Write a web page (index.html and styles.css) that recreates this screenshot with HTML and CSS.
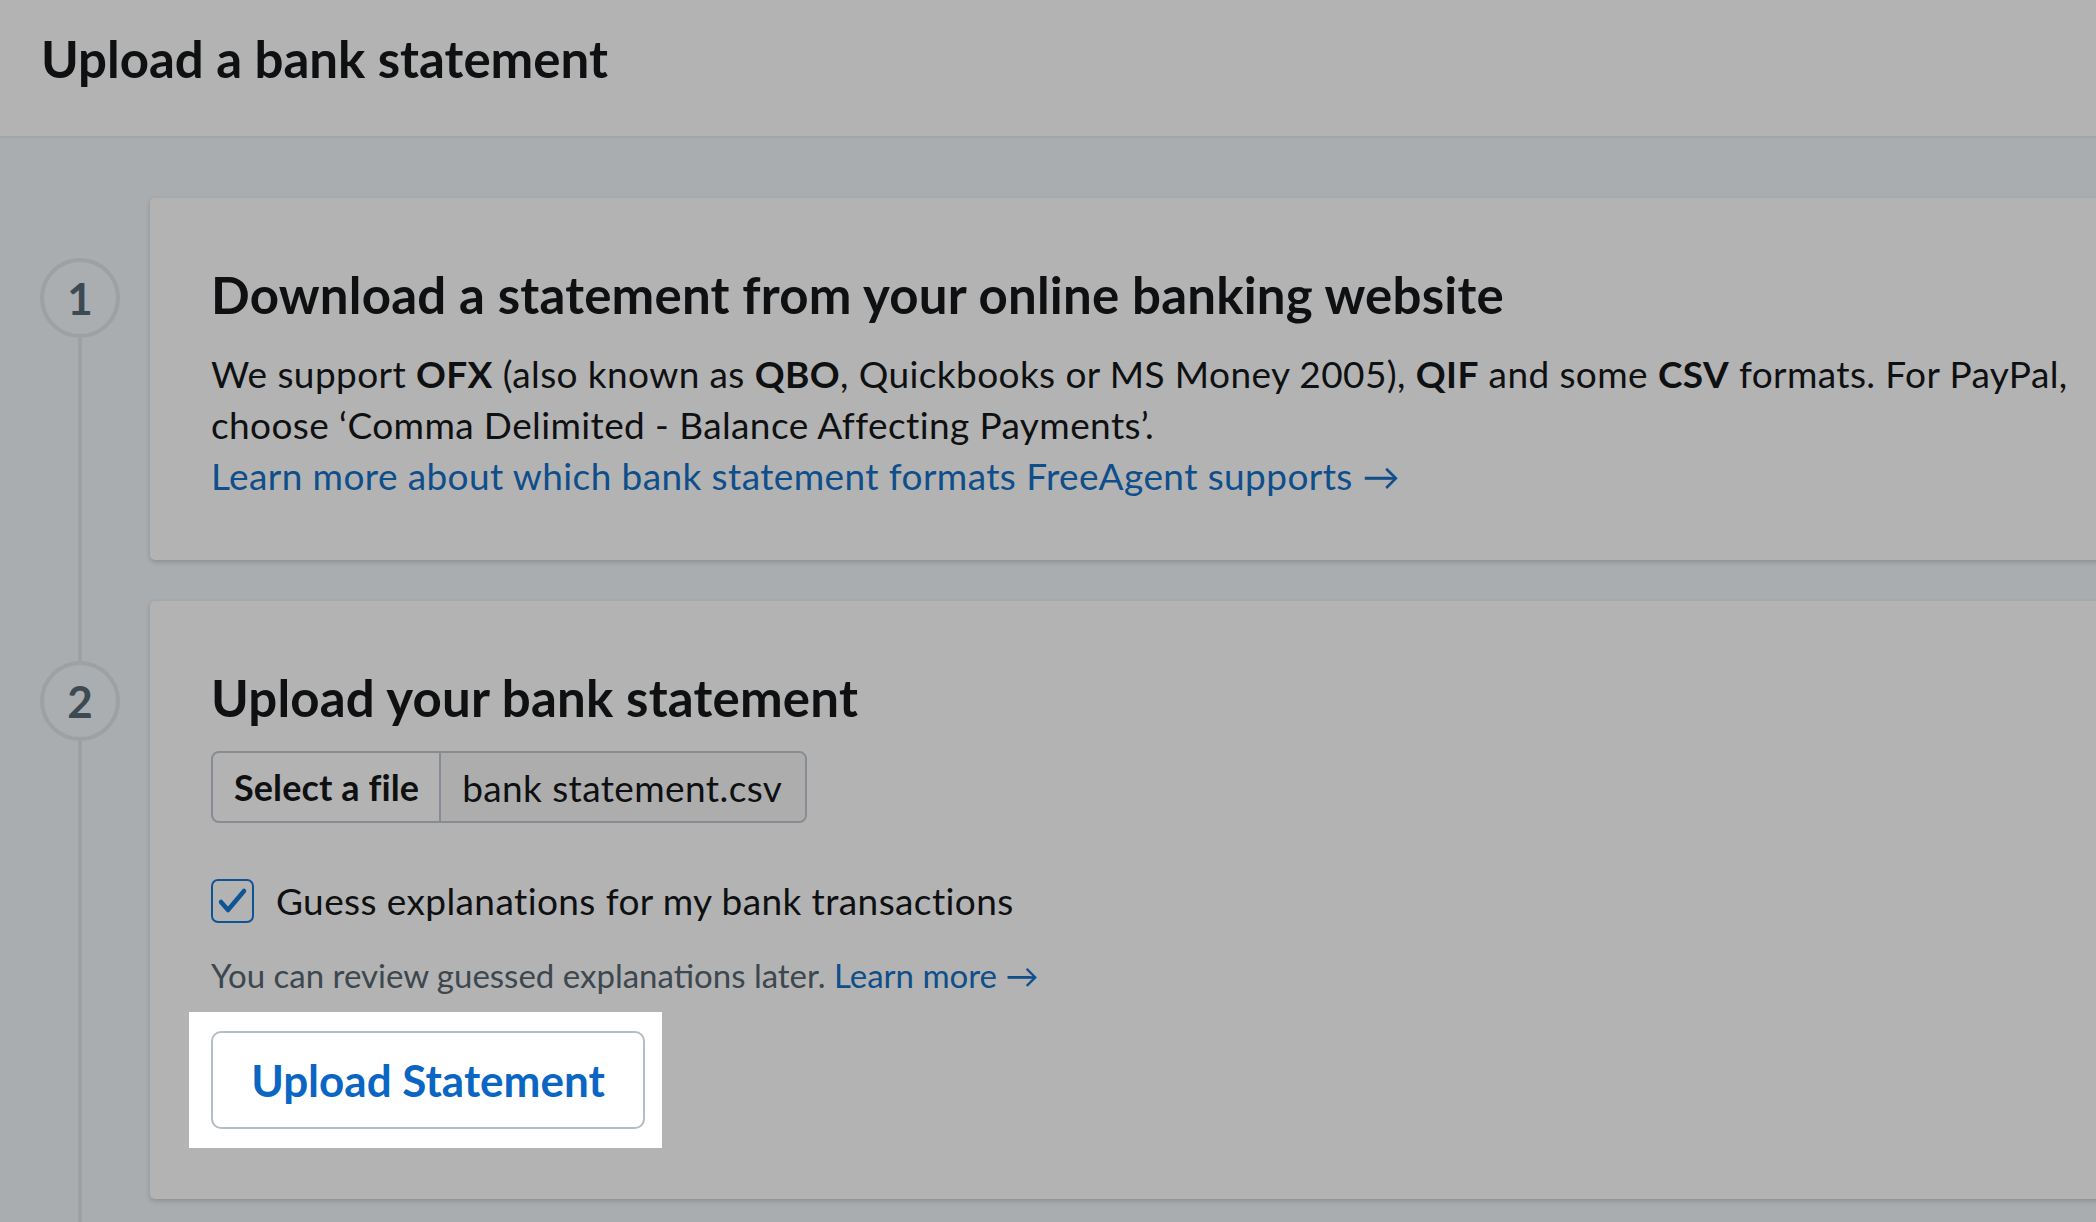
FILE: index.html
```html
<!DOCTYPE html>
<html lang="en">
<head>
    <meta charset="UTF-8">
    <title>Upload a bank statement</title>
    <link rel="stylesheet" href="styles.css">
</head>
<body>
<header class="page-header">
    <h1>Upload a bank statement</h1>
</header>
<main class="steps">
    <section class="step">
        <div class="step-marker"><span class="step-num">1</span></div>
        <div class="step-card">
            <h2>Download a statement from your online banking website</h2>
            <p>We support <b>OFX</b> (also known as <b>QBO</b>, Quickbooks or MS Money 2005), <b>QIF</b> and some <b>CSV</b> formats. For PayPal, choose ‘Comma Delimited - Balance Affecting Payments’.</p>
            <p><a href="#">Learn more about which bank statement formats FreeAgent supports →</a></p>
        </div>
    </section>
    <section class="step">
        <div class="step-marker"><span class="step-num">2</span></div>
        <div class="step-card step-card-upload">
            <h2>Upload your bank statement</h2>
            <div class="file-field">
                <span class="file-btn">Select a file</span>
                <span class="file-name">bank statement.csv</span>
            </div>
            <label class="check-row">
                <span class="check-box">
                    <svg width="39" height="40" viewBox="0 0 39 40"><polyline points="8,21 15,29 31,10" fill="none" stroke="#0f5596" stroke-width="4.5" stroke-linecap="round" stroke-linejoin="round"/></svg>
                </span>
                Guess explanations for my bank transactions
            </label>
            <p class="hint">You can review guessed explanations later. <a href="#">Learn more →</a></p>
            <div class="spotlight">
                <button class="btn-upload">Upload Statement</button>
            </div>
        </div>
    </section>
</main>
</body>
</html>
```
FILE: styles.css
```css
body,h1,h2,p{margin: 0;padding: 0;}
a{text-decoration: none; color: #0e4e8a;}
b{font-weight: 700;}
html,body{ height: 100%; }
body{ font-family: "Lato", "DejaVu Sans", sans-serif; color: #0e1012; background: #a9adb0; overflow: hidden; }

.page-header{ height: 136px; padding: 0 0 0 41px; background: #b3b3b3; border-bottom: 2px solid #a2a5a8; box-sizing: content-box; }
.page-header h1{ padding-top: 28px; font-size: 51px; line-height: 62px; font-weight: 700; }

.steps{ padding-top: 60px; }
.step{ display: grid; grid-template-columns: 150px 1fr; }
.step-marker{ display: flex; flex-direction: column; align-items: center; width: 160px; }
.step-marker::before{ content: ""; width: 4px; height: 60px; background: #9da1a4; }
.step:first-child .step-marker::before{ visibility: hidden; }
.step-marker::after{ content: ""; width: 4px; flex: 1; background: #9da1a4; }
.step-num{ width: 72px; height: 72px; border: 4px solid #9da1a4; border-radius: 50%; display: flex; align-items: center; justify-content: center;
           font-size: 44px; font-weight: 700; color: #3e4a52; background: #aaaeb1; }

.step-card{ margin: 0 -104px 41px 0; padding: 67px 62px 59px 61px; background: #b3b3b3; border-radius: 5px;
            box-shadow: 0 2px 5px rgba(0,0,0,0.18); }
.step-card-upload{ padding-bottom: 51px; }
.step-card h2{ font-size: 51px; line-height: 60px; font-weight: 700; letter-spacing: 0.2px; margin-bottom: 23px; }
.step-card p{ font-size: 37px; line-height: 51px; letter-spacing: 0.4px; }

.file-field{ display: inline-flex; height: 68px; border: 2px solid #868c91; border-radius: 8px; overflow: hidden; font-size: 37px; letter-spacing: 0.4px; }
.file-btn{ display: flex; align-items: center; padding: 0 20px 0 21px; font-size: 36px; font-weight: 700; letter-spacing: 0.1px; border-right: 2px solid #868c91; }
.file-name{ display: flex; align-items: center; padding: 0 23px 0 21px; background: #adadad; }

.check-row{ display: flex; align-items: center; gap: 22px; margin-top: 56px; font-size: 37px; line-height: 44px; letter-spacing: 0.4px; }
.check-box{ display: block; width: 39px; height: 40px; border: 2px solid #0f5596; border-radius: 7px; }
.check-box svg{ display: block; }

.step-card p.hint{ margin-top: 32px; font-size: 33px; line-height: 40px; letter-spacing: 0; color: #3c474f; }

.spotlight{ display: inline-block; margin: 17px 0 0 -22px; padding: 19px 17px 19px 22px; background: #ffffff; }
.btn-upload{ display: block; width: 434px; height: 98px; border: 2px solid #b4bdc3; border-radius: 10px; background: #ffffff;
             font-family: "Lato", sans-serif; font-size: 44px; font-weight: 700; color: #0a66c2; }
```
